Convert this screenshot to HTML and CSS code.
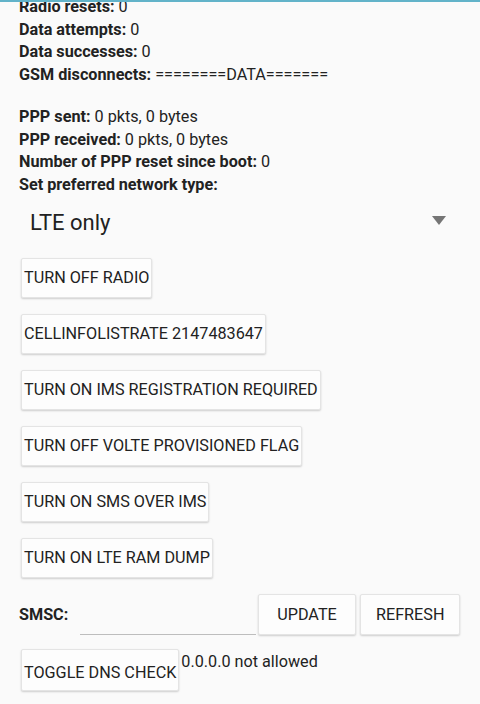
FILE: index.html
```html
<!DOCTYPE html>
<html>
<head>
<meta charset="utf-8">
<link rel="stylesheet" href="styles.css">
</head>
<body>
<div class="topbar"></div>
<main class="page">
  <section class="stats first">
    <div><b>Radio resets:</b> 0</div>
    <div><b>Data attempts:</b> 0</div>
    <div><b>Data successes:</b> 0</div>
    <div><b>GSM disconnects:</b> ========DATA=======</div>
  </section>
  <section class="stats second">
    <div><b>PPP sent:</b> 0 pkts, 0 bytes</div>
    <div><b>PPP received:</b> 0 pkts, 0 bytes</div>
    <div><b>Number of PPP reset since boot:</b> 0</div>
    <div><b>Set preferred network type:</b></div>
  </section>
  <div class="spinner">
    <span class="spinner-text">LTE only</span>
    <svg class="arrow" width="14" height="9" viewBox="0 0 14 9"><path d="M0 0 L14 0 L7 9 Z" fill="#757575"/></svg>
  </div>
  <div class="buttons">
    <button class="btn">TURN OFF RADIO</button>
    <button class="btn">CELLINFOLISTRATE 2147483647</button>
    <button class="btn">TURN ON IMS REGISTRATION REQUIRED</button>
    <button class="btn">TURN OFF VOLTE PROVISIONED FLAG</button>
    <button class="btn">TURN ON SMS OVER IMS</button>
    <button class="btn">TURN ON LTE RAM DUMP</button>
  </div>
  <div class="smsc-row">
    <span class="smsc-label">SMSC:</span>
    <span class="smsc-input"></span>
    <button class="btn btn-wide">UPDATE</button>
    <button class="btn btn-wide">REFRESH</button>
  </div>
  <div class="dns-row">
    <button class="btn btn-dns">TOGGLE DNS CHECK</button>
    <span class="dns-text">0.0.0.0 not allowed</span>
  </div>
</main>
</body>
</html>
```
FILE: styles.css
```css
html, body {
  margin: 0;
  padding: 0;
  background: #fafafa;
  width: 480px;
  height: 704px;
  overflow: hidden;
}
body {
  font-family: Roboto, "Noto Sans", sans-serif;
  color: #212121;
}
.topbar {
  position: fixed;
  top: 0;
  left: 0;
  right: 0;
  height: 2px;
  background: #62b3c9;
  z-index: 2;
}
.page {
  padding-left: 19px;
}
.stats {
  font-size: 16.2px;
  line-height: 22.7px;
  color: #222;
}
.stats b {
  font-weight: 700;
}
.stats.first {
  margin-top: -4px;
}
.stats.second {
  margin-top: 19px;
}
.spinner {
  height: 50px;
  display: flex;
  align-items: center;
  justify-content: space-between;
  padding-left: 11px;
  padding-right: 34px;
  padding-top: 2px;
  box-sizing: border-box;
}
.spinner-text {
  font-size: 22px;
  color: #212121;
}
.arrow {
  display: block;
  margin-top: -4px;
}
.buttons {
  display: flex;
  flex-direction: column;
  align-items: flex-start;
  gap: 16px;
  margin-top: 11px;
  padding-left: 2px;
}
.btn {
  font-family: Roboto, "Noto Sans", sans-serif;
  font-size: 16.2px;
  color: #222;
  height: 40px;
  padding: 0 2px;
  background: #fdfdfd;
  border: 1px solid #e4e4e4;
  border-radius: 2px;
  box-shadow: 0 1px 2px rgba(0, 0, 0, 0.18);
  white-space: nowrap;
  margin: 0;
}
.smsc-row {
  display: flex;
  align-items: center;
  margin-top: 16px;
  height: 41px;
}
.smsc-label {
  font-size: 16.2px;
  font-weight: 700;
  color: #222;
  width: 61px;
}
.smsc-input {
  width: 176px;
  height: 40px;
  border-bottom: 1px solid #bdbdbd;
  box-sizing: border-box;
  margin-right: 2px;
  align-self: flex-end;
}
.btn-wide {
  height: 41px;
  min-width: 98px;
  padding: 0 15px;
  margin-right: 4px;
}
.dns-row {
  display: flex;
  align-items: flex-start;
  margin-top: 14px;
  padding-left: 2px;
}
.btn-dns {
  height: 42px;
  padding-top: 6px;
}
.dns-text {
  font-size: 16.2px;
  color: #222;
  margin-left: 2px;
  margin-top: 3px;
}
```
